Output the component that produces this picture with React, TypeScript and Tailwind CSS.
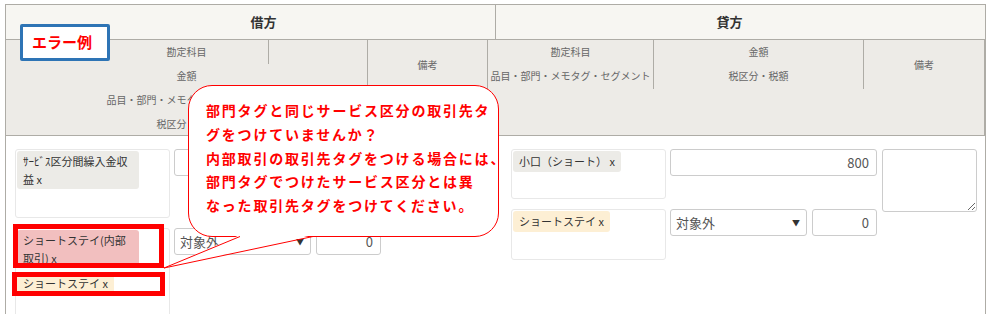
import React from 'react';

type Tone = 'gray' | 'pink' | 'yellow';
type TagDef = { label: string; tone: Tone; twoLine?: boolean };

function Tag({ label, tone, twoLine }: TagDef) {
  const bg = tone === 'pink' ? 'bg-[#f2bfbf]' : tone === 'yellow' ? 'bg-[#fdefd4]' : 'bg-[#ecebe7]';
  const h = twoLine ? 'h-[38px]' : 'h-[21px]';
  return (
    <span className={`${bg} ${h} block max-w-[122px] overflow-hidden rounded-[3px] px-[6px] pt-[1px] text-[11px] leading-[18px] text-[#333]`}>
      {`${label} x`}
    </span>
  );
}

function TagBox({ tags, h }: { tags: TagDef[]; h: string }) {
  return (
    <div className={`${h} flex w-[155px] flex-col items-start gap-[5px] rounded-[3px] border border-[#e8e8e8] bg-white p-[1px]`}>
      {tags.map((t) => (
        <Tag key={t.label} {...t} />
      ))}
    </div>
  );
}

function NumInput({ value, w }: { value: string; w: string }) {
  return (
    <div className={`${w} h-[27px] rounded-[3px] border border-[#cccccc] bg-white px-[7px] text-right text-[13px] leading-[25px] text-[#555]`}>
      {value}
    </div>
  );
}

function Select() {
  return (
    <div className="flex h-[27px] w-[137px] items-center justify-between rounded-[3px] border border-[#cccccc] bg-white pl-[5px] pr-[6px] text-[13px] text-[#555]">
      <span>対象外</span>
      <span className="text-[8px] text-[#333]">▼</span>
    </div>
  );
}

function Side({
  first,
  second,
  amount,
  h1,
  h2,
}: {
  first: TagDef[];
  second: TagDef[];
  amount: string;
  h1: string;
  h2: string;
}) {
  return (
    <div className="flex items-start gap-[5px]">
      <div className="grid grid-cols-[155px_207px] content-start items-start gap-x-[4px] gap-y-[10px]">
        <TagBox tags={first} h={h1} />
        <NumInput value={amount} w="w-[207px]" />
        <TagBox tags={second} h={h2} />
        <div className="flex gap-[5px]">
          <Select />
          <NumInput value="0" w="w-[65px]" />
        </div>
      </div>
      <textarea readOnly className="h-[63px] w-[95px] rounded-[3px] border border-[#cccccc] bg-white" />
    </div>
  );
}

export default function App() {
  const text = 'text-[10px] leading-[24px] text-[#666]';
  return (
    <div className="relative h-[314px] w-[994px] overflow-hidden bg-white font-['Noto_Sans_CJK_JP','Noto_Sans',sans-serif]">
      <div className="ml-[5px] mt-[4px] w-[981px] border-x border-t border-[#aeaca6]">
        {/* 借方 / 貸方 */}
        <div className="flex h-[34px] bg-[#f7f6f2] text-[13px] font-bold text-[#333]">
          <div className="flex w-[490px] items-center justify-center border-r border-[#aeaca6] pl-[26px]">借方</div>
          <div className="flex flex-1 items-center justify-center pr-[22px]">貸方</div>
        </div>
        {/* column titles */}
        <div className="flex h-[97px] border-y border-[#aeaca6] bg-[#edebe7] text-center">
          <div className={`relative w-[362px] border-r border-[#aeaca6] ${text}`}>
            <div className="absolute left-[262px] top-0 h-[24px] w-px bg-[#aeaca6]" />
            <p>勘定科目</p>
            <p>金額</p>
            <p>品目・部門・メモタグ・セグメント</p>
            <p>税区分・税額</p>
          </div>
          <div className={`w-[120px] border-r border-[#aeaca6] pt-[13px] ${text}`}>備考</div>
          <div className="flex h-[49px] w-[376px] border-r border-[#aeaca6]">
            <div className={`w-[166px] border-r border-[#aeaca6] ${text}`}>
              <p>勘定科目</p>
              <p className="whitespace-nowrap">品目・部門・メモタグ・セグメント</p>
            </div>
            <div className={`flex-1 ${text}`}>
              <p>金額</p>
              <p>税区分・税額</p>
            </div>
          </div>
          <div className={`flex-1 border-r border-[#aeaca6] pt-[13px] ${text}`}>備考</div>
        </div>
        {/* body */}
        <div className="flex h-[200px] items-start pl-[9px] pt-[13px]">
          <Side
            amount=""
            h1="h-[69px]"
            h2="h-[100px]"
            first={[{ label: 'ｻｰﾋﾞｽ区分間繰入金収益', tone: 'gray', twoLine: true }]}
            second={[
              { label: 'ショートステイ(内部取引)', tone: 'pink', twoLine: true },
              { label: 'ショートステイ', tone: 'yellow' },
            ]}
          />
          <div className="ml-[30px]">
            <Side
              amount="800"
              h1="h-[50px]"
              h2="h-[51px]"
              first={[{ label: '小口（ショート）', tone: 'gray' }]}
              second={[{ label: 'ショートステイ', tone: 'yellow' }]}
            />
          </div>
        </div>
      </div>

      {/* error label */}
      <div className="absolute left-[20px] top-[24px] flex h-[37px] w-[90px] items-center rounded-[2px] border-[3px] border-[#2e74b5] bg-white pl-[9px] text-[15px] font-bold text-[#ff0000]">
        エラー例
      </div>

      {/* highlight boxes */}
      <div className="absolute left-[13px] top-[224px] h-[44px] w-[151px] border-[5px] border-[#ff0000]" />
      <div className="absolute left-[12px] top-[272px] h-[24px] w-[153px] border-[5px] border-[#ff0000]" />

      {/* speech balloon */}
      <div className="absolute left-[188px] top-[85px] h-[152px] w-[311px] rounded-[24px] border border-[#ff0000] bg-white pl-[17px] pt-[13px] text-[14px] font-bold leading-[23.75px] tracking-[1.8px] text-[#ff0000]">
        <p className="whitespace-nowrap">部門タグと同じサービス区分の取引先タ</p>
        <p className="whitespace-nowrap">グをつけていませんか？</p>
        <p className="whitespace-nowrap">内部取引の取引先タグをつける場合には、</p>
        <p className="whitespace-nowrap">部門タグでつけたサービス区分とは異</p>
        <p className="whitespace-nowrap">なった取引先タグをつけてください。</p>
      </div>
      <svg className="absolute left-0 top-0" width="994" height="314">
        <polygon points="240,235 164,268 313,235" fill="#ffffff" />
        <polyline points="240,236.5 164,268 313,236.5" fill="none" stroke="#ff0000" strokeWidth="1" />
      </svg>
    </div>
  );
}
